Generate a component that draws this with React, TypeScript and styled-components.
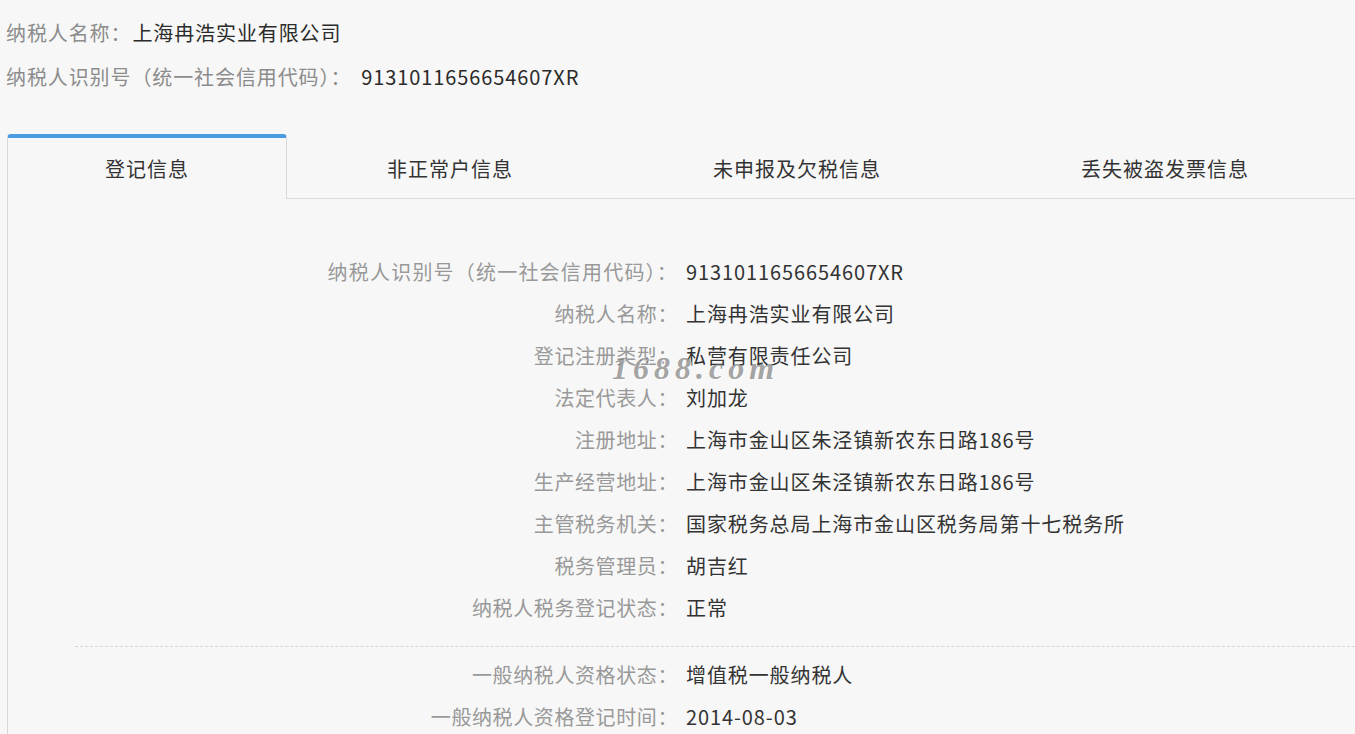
import styled, { createGlobalStyle } from 'styled-components'

const GlobalStyle = createGlobalStyle`
  html, body {
    margin: 0;
    padding: 0;
    background: #f7f7f7;
    font-family: "Noto Sans CJK SC", "Noto Sans", sans-serif;
    overflow: hidden;
  }
`
const Page = styled.div`
  width: 1355px;
  height: 734px;
  overflow: hidden;
  background: #f7f7f7;
`
const Header = styled.div`
  padding: 10px 0 0 6px;
  display: flex;
  flex-direction: column;
`
const HeaderLine = styled.div`
  display: flex;
  align-items: center;
  height: 44px;
  font-size: 20px;
  letter-spacing: 0.9px;
`
const HeaderLabel = styled.span`
  color: #8c8c8c;
`
const HeaderValue = styled.span<{ $gap: number }>`
  color: #2b2b2b;
  margin-left: ${(p) => p.$gap}px;
`
const Box = styled.div`
  margin: 36px 0 0 7px;
`
const TabBar = styled.div`
  display: flex;
  height: 65px;
  border-bottom: 1px solid #dcdcdc;
  box-sizing: border-box;
`
const Tab = styled.div<{ $active?: boolean }>`
  display: flex;
  align-items: center;
  justify-content: center;
  padding: 0 ${(p) => (p.$active ? '97px' : '99px')};
  box-sizing: border-box;
  height: ${(p) => (p.$active ? '65px' : '64px')};
  font-size: 20px;
  letter-spacing: 1px;
  color: #333;
  border-top: 4px solid ${(p) => (p.$active ? '#4a9be0' : 'transparent')};
  border-left: 1px solid ${(p) => (p.$active ? '#d8d8d8' : 'transparent')};
  border-right: 1px solid ${(p) => (p.$active ? '#d8d8d8' : 'transparent')};
  border-radius: ${(p) => (p.$active ? '4px 4px 0 0' : '0')};
  background: #f7f7f7;
  white-space: nowrap;
`
const Panel = styled.div`
  position: relative;
  border-left: 1px solid #d8d8d8;
  padding-top: 51px;
  height: 600px;
`
const Row = styled.div`
  display: flex;
  align-items: center;
  height: 42px;
  font-size: 20px;
`
const Label = styled.div<{ $wide?: boolean }>`
  width: 670px;
  text-align: right;
  color: #999;
  letter-spacing: ${(p) => (p.$wide ? '1.2px' : '0.6px')};
  white-space: nowrap;
`
const Value = styled.div`
  margin-left: 8px;
  color: #333;
  letter-spacing: 0.9px;
  white-space: nowrap;
`
const Divider = styled.div`
  margin: 18px 0 6px 67px;
  border-top: 1px dashed #d6d6d6;
`
const Watermark = styled.div`
  position: absolute;
  left: 604px;
  top: 153px;
  font-family: "Liberation Serif", serif;
  font-style: italic;
  font-weight: bold;
  font-size: 32px;
  line-height: 1;
  letter-spacing: 5px;
  color: rgba(105, 105, 105, 0.62);
  text-shadow: 1px 1px 0 rgba(255, 255, 255, 0.8);
  pointer-events: none;
`

const tabs = ['登记信息', '非正常户信息', '未申报及欠税信息', '丢失被盗发票信息']

const rows = [
  ['纳税人识别号（统一社会信用代码）：', '9131011656654607XR'],
  ['纳税人名称：', '上海冉浩实业有限公司'],
  ['登记注册类型：', '私营有限责任公司'],
  ['法定代表人：', '刘加龙'],
  ['注册地址：', '上海市金山区朱泾镇新农东日路186号'],
  ['生产经营地址：', '上海市金山区朱泾镇新农东日路186号'],
  ['主管税务机关：', '国家税务总局上海市金山区税务局第十七税务所'],
  ['税务管理员：', '胡吉红'],
  ['纳税人税务登记状态：', '正常'],
]

const rows2 = [
  ['一般纳税人资格状态：', '增值税一般纳税人'],
  ['一般纳税人资格登记时间：', '2014-08-03'],
]

export default function App() {
  return (
    <Page>
      <GlobalStyle />
      <Header>
        <HeaderLine>
          <HeaderLabel>纳税人名称：</HeaderLabel>
          <HeaderValue $gap={1}>上海冉浩实业有限公司</HeaderValue>
        </HeaderLine>
        <HeaderLine>
          <HeaderLabel>纳税人识别号（统一社会信用代码）：</HeaderLabel>
          <HeaderValue $gap={10}>9131011656654607XR</HeaderValue>
        </HeaderLine>
      </Header>
      <Box>
        <TabBar>
          {tabs.map((t, i) => (
            <Tab key={t} $active={i === 0}>
              {t}
            </Tab>
          ))}
        </TabBar>
        <Panel>
          {rows.map(([l, v], i) => (
            <Row key={l}>
              <Label $wide={i === 0}>{l}</Label>
              <Value>{v}</Value>
            </Row>
          ))}
          <Divider />
          {rows2.map(([l, v]) => (
            <Row key={l}>
              <Label>{l}</Label>
              <Value>{v}</Value>
            </Row>
          ))}
          <Watermark>1688.com</Watermark>
        </Panel>
      </Box>
    </Page>
  )
}
